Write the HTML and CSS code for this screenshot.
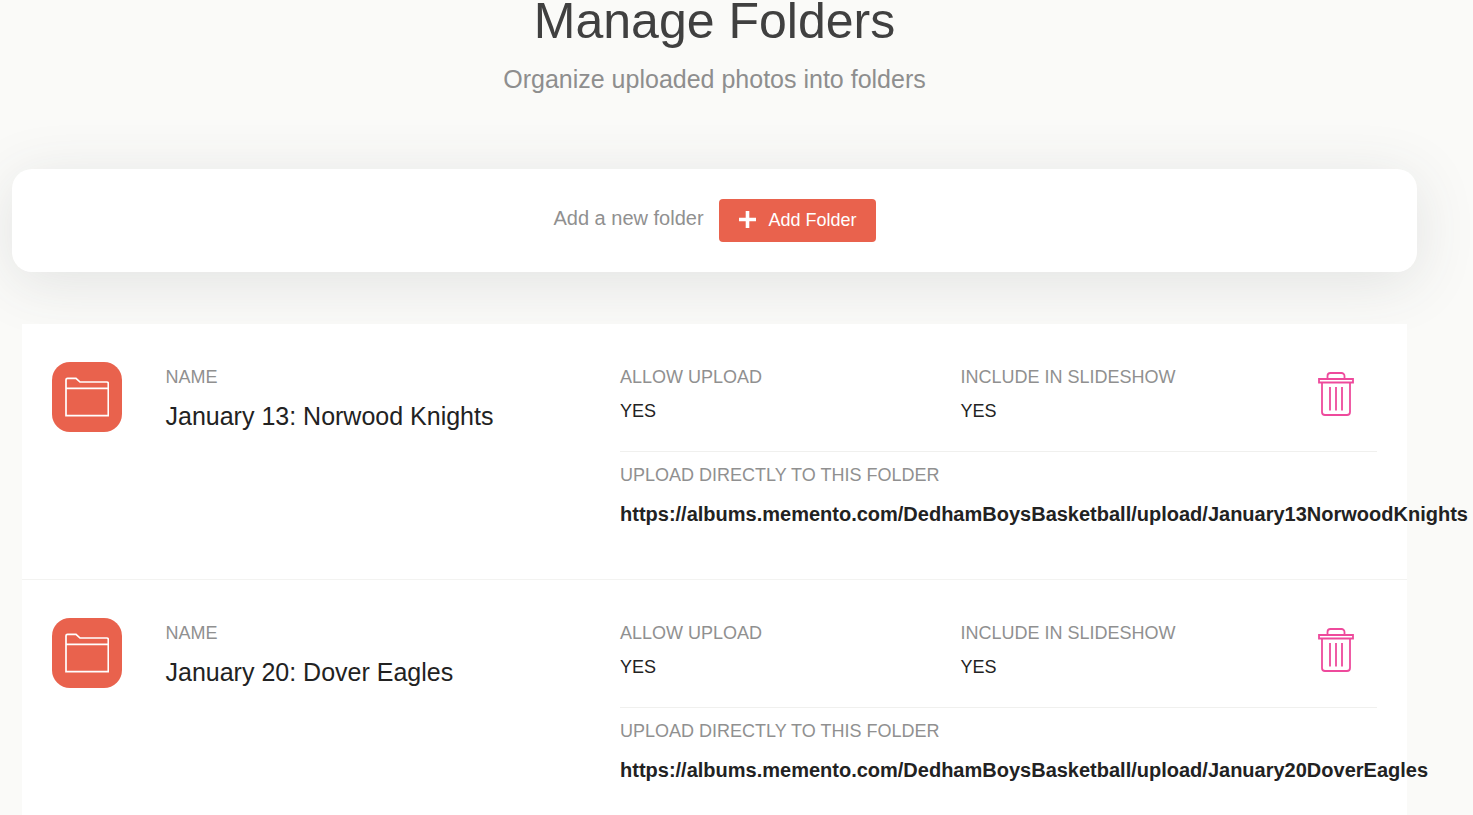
FILE: index.html
```html
<!DOCTYPE html>
<html lang="en">
<head>
<meta charset="utf-8">
<title>Manage Folders</title>
<link rel="stylesheet" href="styles.css">
</head>
<body>
<main class="page">
  <header class="page-head">
    <h1 class="page-title">Manage Folders</h1>
    <p class="page-sub">Organize uploaded photos into folders</p>
  </header>
  <section class="add-card">
    <span class="add-label">Add a new folder</span>
    <button class="add-btn" type="button">
      <svg class="add-icon" viewBox="0 0 17 17" width="17" height="17" aria-hidden="true"><path d="M8.500 0v17M0 8.500h17" fill="none" stroke="#fff" stroke-width="3.600"/></svg>
      <span>Add Folder</span>
    </button>
  </section>
  <section class="folders">
    <article class="folder">
      <div class="folder-badge">
        <svg viewBox="0 0 44 40" width="44" height="40" fill="none" stroke="#fff" stroke-width="1.700" aria-hidden="true"><path d="M1 11.300V2.800A1.500 1.500 0 0 1 2.500 1.300H11L15 5H41.800A1.500 1.500 0 0 1 43.300 6.500V38.700H1ZM1 11.300H43.300"/></svg>
      </div>
      <div class="folder-name">
        <div class="label">NAME</div>
        <div class="name">January 13: Norwood Knights</div>
      </div>
      <div class="folder-info">
        <div class="info-top">
          <div class="info-col">
            <div class="label">ALLOW UPLOAD</div>
            <div class="value">YES</div>
          </div>
          <div class="info-col">
            <div class="label">INCLUDE IN SLIDESHOW</div>
            <div class="value">YES</div>
          </div>
          <svg class="trash" viewBox="0 0 36 44" width="36" height="44" fill="none" stroke="#ee4a9c" stroke-width="1.800" aria-hidden="true"><path d="M1 7H35V10.500H1ZM9.500 7V4A3 3 0 0 1 12.500 1H23.500A3 3 0 0 1 26.500 4V7M4 10.500V40A3 3 0 0 0 7 43H29A3 3 0 0 0 32 40V10.500M12 15V38.500M18 15V38.500M24 15V38.500"/></svg>
        </div>
        <div class="info-link">
          <div class="label">UPLOAD DIRECTLY TO THIS FOLDER</div>
          <div class="link">https://albums.memento.com/DedhamBoysBasketball/upload/January13NorwoodKnights</div>
        </div>
      </div>
    </article>
    <article class="folder">
      <div class="folder-badge">
        <svg viewBox="0 0 44 40" width="44" height="40" fill="none" stroke="#fff" stroke-width="1.700" aria-hidden="true"><path d="M1 11.300V2.800A1.500 1.500 0 0 1 2.500 1.300H11L15 5H41.800A1.500 1.500 0 0 1 43.300 6.500V38.700H1ZM1 11.300H43.300"/></svg>
      </div>
      <div class="folder-name">
        <div class="label">NAME</div>
        <div class="name">January 20: Dover Eagles</div>
      </div>
      <div class="folder-info">
        <div class="info-top">
          <div class="info-col">
            <div class="label">ALLOW UPLOAD</div>
            <div class="value">YES</div>
          </div>
          <div class="info-col">
            <div class="label">INCLUDE IN SLIDESHOW</div>
            <div class="value">YES</div>
          </div>
          <svg class="trash" viewBox="0 0 36 44" width="36" height="44" fill="none" stroke="#ee4a9c" stroke-width="1.800" aria-hidden="true"><path d="M1 7H35V10.500H1ZM9.500 7V4A3 3 0 0 1 12.500 1H23.500A3 3 0 0 1 26.500 4V7M4 10.500V40A3 3 0 0 0 7 43H29A3 3 0 0 0 32 40V10.500M12 15V38.500M18 15V38.500M24 15V38.500"/></svg>
        </div>
        <div class="info-link">
          <div class="label">UPLOAD DIRECTLY TO THIS FOLDER</div>
          <div class="link">https://albums.memento.com/DedhamBoysBasketball/upload/January20DoverEagles</div>
        </div>
      </div>
    </article>
  </section>
</main>
</body>
</html>
```
FILE: styles.css
```css
* { box-sizing: border-box; }
html, body { margin: 0; height: 100%; overflow: hidden; }
body {
  background: #fafaf8;
  font-family: "Liberation Sans", Arial, sans-serif;
  color: #222;
}
.page { width: 1429px; margin-top: -8px; }
.page-head { text-align: center; }
.page-title {
  margin: 0;
  font-size: 50px;
  line-height: 58px;
  font-weight: 400;
  color: #404040;
}
.page-sub {
  margin: 14px 0 0;
  font-size: 25px;
  line-height: 30px;
  color: #8e8e8e;
}
.add-card {
  margin: 75px 12px 0;
  height: 103px;
  background: #fff;
  border-radius: 20px;
  box-shadow: 0 10px 60px rgba(60, 70, 80, 0.13);
  display: flex;
  align-items: center;
  justify-content: center;
  gap: 15px;
}
.add-label { font-size: 20px; color: #909090; position: relative; top: -2px; }
.add-btn {
  display: flex;
  align-items: center;
  gap: 13px;
  height: 43px;
  width: 157px;
  padding: 0 0 0 20px;
  border: 0;
  border-radius: 4px;
  background: #e9624d;
  color: #fff;
  font: 18px "Liberation Sans", Arial, sans-serif;
}
.add-icon { flex: none; position: relative; top: -1px; }
.folders { margin: 52px 22px 0; background: #fff; }
.folder {
  display: flex;
  height: 256px;
  padding: 38px 30px 0;
  border-bottom: 1px solid #f3f3f1;
}
.folder-badge {
  flex: none;
  width: 70px;
  height: 70px;
  border-radius: 18px;
  background: #e9624d;
  display: flex;
  align-items: center;
  justify-content: center;
}
.folder-name { width: 454.500px; margin-left: 43.500px; flex: none; }
.label { font-size: 18px; line-height: 30px; color: #909090; }
.name { font-size: 25px; line-height: 30px; margin-top: 9px; color: #222; }
.folder-info { flex: 1; min-width: 0; }
.info-top {
  display: flex;
  height: 90px;
  border-bottom: 1px solid #f0f0ee;
}
.info-col { width: 340.500px; flex: none; }
.value { font-size: 18px; line-height: 30px; margin-top: 4px; color: #222; }
.trash { margin-left: 17px; margin-top: 10px; flex: none; }
.info-link { padding-top: 8px; }
.link {
  font-size: 20px;
  line-height: 30px;
  font-weight: 700;
  margin-top: 9px;
  white-space: nowrap;
  color: #222;
}
```
